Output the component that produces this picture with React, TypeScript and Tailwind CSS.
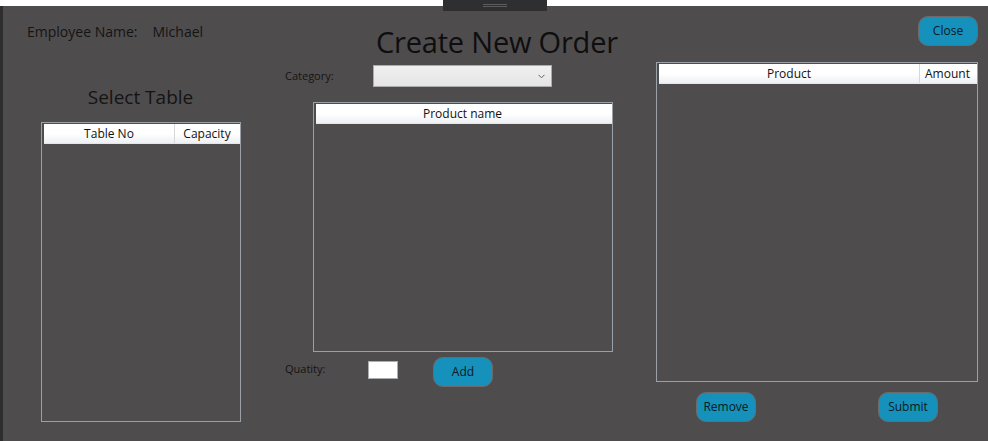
import React from "react";

const font = { fontFamily: '"Open Sans", "Noto Sans", sans-serif' };

function BlueButton({ label }: { label: string }) {
  return (
    <button className="w-[60px] h-[30px] rounded-[10px] bg-[#1591bb] border border-[#6b6b6b] text-[12px] text-[#0b1a24]">
      {label}
    </button>
  );
}

function ListBox({
  columns,
  className,
}: {
  columns: { name: string; width: string }[];
  className: string;
}) {
  return (
    <div className={`border border-[#9aa0a8] pl-[2px] pt-[1px] ${className}`}>
      <div className="flex h-[20px] bg-gradient-to-b from-white via-white to-[#eef0f3] border-b border-[#e3e5e8]">
        {columns.map((c, i) => (
          <div
            key={c.name}
            className={`${c.width} shrink-0 flex items-center justify-center text-[12px] text-[#111] ${
              i > 0 ? "border-l border-[#d5d7da]" : ""
            }`}
          >
            {c.name}
          </div>
        ))}
      </div>
    </div>
  );
}

export default function App() {
  return (
    <div className="relative w-[988px] h-[441px] bg-white overflow-hidden" style={font}>
      {/* drag handle */}
      <div className="absolute left-[443px] top-0 w-[104px] h-[11px] bg-[#2f2f31] flex flex-col items-center pt-[4px] gap-[1px] z-10">
        <div className="w-[24px] h-px bg-[#5c5c5e]" />
        <div className="w-[24px] h-px bg-[#5c5c5e]" />
      </div>

      <div className="mt-[6px] h-[435px] bg-[#4f4c4d] border-l-[3px] border-[#2e2e2e] text-[#141414]">
        {/* header row */}
        <div className="flex items-start h-[52px]">
          <div className="w-[373px] pl-[24px] pt-[16px] flex text-[14px] leading-[20px]">
            <span>Employee Name:</span>
            <span className="ml-[15px]">Michael</span>
          </div>
          <div className="pt-[18px] text-[29px] leading-[36px] text-[#0e0e0e] tracking-[-0.2px]">
            Create New Order
          </div>
          <div className="flex-1 flex justify-end pr-[10px] pt-[10px]">
            <BlueButton label="Close" />
          </div>
        </div>

        {/* columns */}
        <div className="flex items-start">
          {/* left */}
          <div className="ml-[38px] w-[200px] flex flex-col">
            <div className="mt-[26px] text-center text-[19px] leading-[26px] pr-[1px]">
              Select Table
            </div>
            <ListBox
              className="mt-[12px] h-[300px]"
              columns={[
                { name: "Table No", width: "w-[130px]" },
                { name: "Capacity", width: "w-[65px]" },
              ]}
            />
          </div>

          {/* middle */}
          <div className="ml-[44px] w-[330px] flex flex-col">
            <div className="mt-[7px] flex items-center h-[22px]">
              <span className="w-[88px] text-[11px]">Category:</span>
              <div className="w-[179px] h-[22px] border border-[#acacac] bg-gradient-to-b from-[#f0f0f0] to-[#e5e5e5] flex items-center justify-end pr-[6px]">
                <svg width="7" height="5" viewBox="0 0 7 5">
                  <path d="M0.5 0.8 L3.5 3.8 L6.5 0.8" fill="none" stroke="#606060" strokeWidth="1" />
                </svg>
              </div>
            </div>
            <ListBox
              className="ml-[28px] mt-[15px] w-[300px] h-[250px]"
              columns={[{ name: "Product name", width: "w-[293px]" }]}
            />
            <div className="mt-[5px] flex items-start">
              <span className="w-[83px] mt-[5px] text-[11px] leading-[14px]">Quatity:</span>
              <div className="mt-[4px] w-[30px] h-[18px] bg-white border border-[#abadb3]" />
              <div className="ml-[35px]">
                <BlueButton label="Add" />
              </div>
            </div>
          </div>

          {/* right */}
          <div className="ml-[41px] w-[322px] flex flex-col">
            <ListBox
              className="mt-[4px] h-[320px]"
              columns={[
                { name: "Product", width: "w-[260px]" },
                { name: "Amount", width: "w-[56px]" },
              ]}
            />
            <div className="mt-[10px] flex pl-[40px] gap-[122px]">
              <BlueButton label="Remove" />
              <BlueButton label="Submit" />
            </div>
          </div>
        </div>
      </div>
    </div>
  );
}
